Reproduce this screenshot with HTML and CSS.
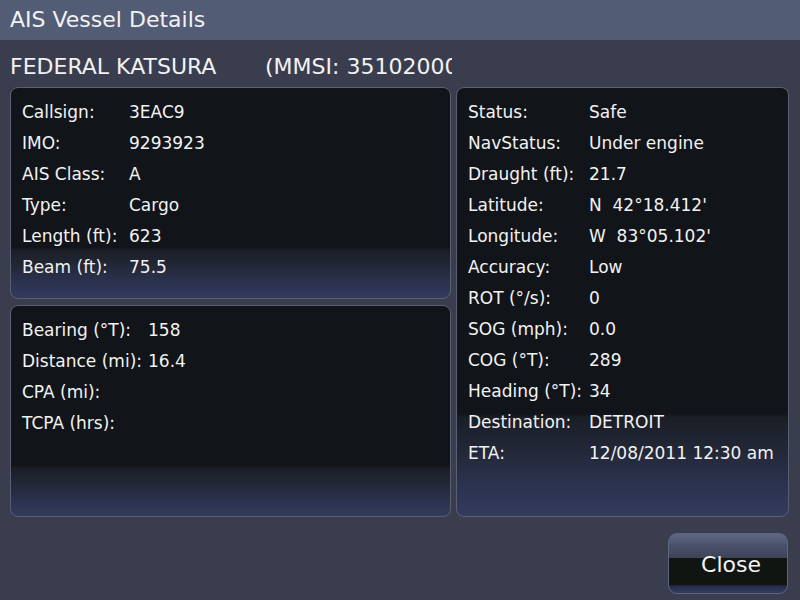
FILE: index.html
```html
<!DOCTYPE html>
<html>
<head>
<meta charset="utf-8">
<link rel="stylesheet" href="styles.css">
</head>
<body>
<div class="screen">
  <div class="titlebar">AIS Vessel Details</div>
  <div class="vessel"><span class="name">FEDERAL KATSURA</span><span class="mmsi">(MMSI: 351020000)</span></div>
  <div class="panels">
    <div class="col-left">
      <div class="panel p-static">
        <div class="row"><span class="lbl">Callsign:</span><span class="val">3EAC9</span></div>
        <div class="row"><span class="lbl">IMO:</span><span class="val">9293923</span></div>
        <div class="row"><span class="lbl">AIS Class:</span><span class="val">A</span></div>
        <div class="row"><span class="lbl">Type:</span><span class="val">Cargo</span></div>
        <div class="row"><span class="lbl">Length (ft):</span><span class="val">623</span></div>
        <div class="row"><span class="lbl">Beam (ft):</span><span class="val">75.5</span></div>
      </div>
      <div class="panel p-nav">
        <div class="row"><span class="lbl">Bearing (°T):</span><span class="val">158</span></div>
        <div class="row"><span class="lbl">Distance (mi):</span><span class="val">16.4</span></div>
        <div class="row"><span class="lbl">CPA (mi):</span><span class="val"></span></div>
        <div class="row"><span class="lbl">TCPA (hrs):</span><span class="val"></span></div>
      </div>
    </div>
    <div class="panel p-dyn">
      <div class="row"><span class="lbl">Status:</span><span class="val">Safe</span></div>
      <div class="row"><span class="lbl">NavStatus:</span><span class="val">Under engine</span></div>
      <div class="row"><span class="lbl">Draught (ft):</span><span class="val">21.7</span></div>
      <div class="row"><span class="lbl">Latitude:</span><span class="val">N&nbsp;&nbsp;42°18.412'</span></div>
      <div class="row"><span class="lbl">Longitude:</span><span class="val">W&nbsp;&nbsp;83°05.102'</span></div>
      <div class="row"><span class="lbl">Accuracy:</span><span class="val">Low</span></div>
      <div class="row"><span class="lbl">ROT (°/s):</span><span class="val">0</span></div>
      <div class="row"><span class="lbl">SOG (mph):</span><span class="val">0.0</span></div>
      <div class="row"><span class="lbl">COG (°T):</span><span class="val">289</span></div>
      <div class="row"><span class="lbl">Heading (°T):</span><span class="val">34</span></div>
      <div class="row"><span class="lbl">Destination:</span><span class="val">DETROIT</span></div>
      <div class="row"><span class="lbl">ETA:</span><span class="val">12/08/2011 12:30 am</span></div>
    </div>
  </div>
  <div class="footer">
    <button class="close">Close</button>
  </div>
</div>
</body>
</html>
```
FILE: styles.css
```css
html, body {
  margin: 0;
  padding: 0;
}
body {
  background: #3a3d4e;
  font-family: "DejaVu Sans", "Liberation Sans", sans-serif;
  color: #f2f2f2;
}
.screen {
  width: 800px;
  height: 600px;
  overflow: hidden;
  display: flex;
  flex-direction: column;
  background: #3a3d4e;
}
.titlebar {
  height: 40px;
  line-height: 40px;
  background: #535c75;
  padding-left: 10px;
  font-size: 22px;
  box-sizing: border-box;
}
.vessel {
  width: 442px;
  margin-left: 10px;
  height: 47px;
  padding-top: 14px;
  box-sizing: border-box;
  line-height: 26px;
  font-size: 22px;
  white-space: nowrap;
  overflow: hidden;
}
.vessel .name {
  display: inline-block;
  width: 255px;
}
.panels {
  display: flex;
  gap: 5px;
  margin-left: 10px;
  height: 430px;
}
.col-left {
  width: 441px;
  display: flex;
  flex-direction: column;
  gap: 6px;
}
.panel {
  box-sizing: border-box;
  border: 1px solid #5a5f72;
  border-radius: 8px;
  background: linear-gradient(to bottom,
    #111418 0%,
    #111418 76%,
    #1a1e26 77%,
    #232838 85%,
    #2c3350 93%,
    #333b5d 100%);
  padding: 9px 0 0 11px;
  font-size: 17px;
}
.p-static, .p-nav {
  height: 212px;
}
.p-dyn {
  width: 333px;
  height: 430px;
}
.row {
  display: flex;
  height: 31px;
  line-height: 31px;
  white-space: nowrap;
}
.p-static .lbl { width: 107px; }
.p-nav .lbl { width: 126px; }
.p-dyn .lbl { width: 121px; }
.footer {
  display: flex;
  justify-content: flex-end;
  padding: 16px 12px 0 0;
}
.close {
  width: 120px;
  height: 61px;
  box-sizing: border-box;
  border: 1px solid #5d6480;
  border-radius: 9px;
  background: linear-gradient(to bottom,
    #5e6786 0%,
    #4a516a 20%,
    #3d4357 40%,
    #111512 41%,
    #111512 86%,
    #262c48 88%,
    #343c60 100%);
  color: #f4f4f4;
  font-family: "DejaVu Sans", "Liberation Sans", sans-serif;
  font-size: 22px;
  padding: 0 0 0 6px;
  line-height: 61px;
}
```
